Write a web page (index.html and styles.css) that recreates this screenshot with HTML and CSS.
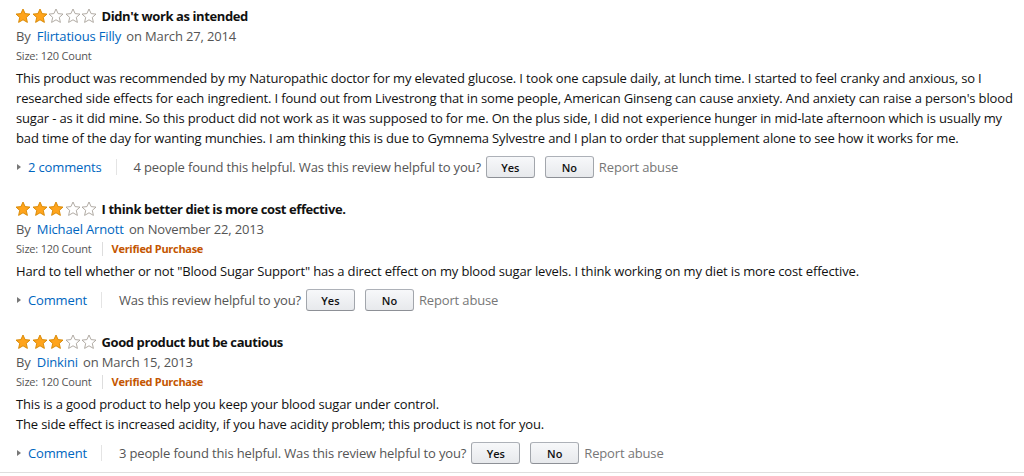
FILE: index.html
```html
<!DOCTYPE html>
<html>
<head>
<meta charset="utf-8">
<link rel="stylesheet" href="styles.css">
</head>
<body>
<div class="reviews">
  <div class="review">
    <div class="head">
      <span class="stars">
        <svg class="star full" viewBox="0 0 16 16"><polygon points="8,1 10.1,5.6 15,6.1 11.3,9.4 12.4,14.4 8,11.8 3.6,14.4 4.7,9.4 1,6.1 5.9,5.6"/></svg><svg class="star full" viewBox="0 0 16 16"><polygon points="8,1 10.1,5.6 15,6.1 11.3,9.4 12.4,14.4 8,11.8 3.6,14.4 4.7,9.4 1,6.1 5.9,5.6"/></svg><svg class="star empty" viewBox="0 0 16 16"><polygon points="8,1 10.1,5.6 15,6.1 11.3,9.4 12.4,14.4 8,11.8 3.6,14.4 4.7,9.4 1,6.1 5.9,5.6"/></svg><svg class="star empty" viewBox="0 0 16 16"><polygon points="8,1 10.1,5.6 15,6.1 11.3,9.4 12.4,14.4 8,11.8 3.6,14.4 4.7,9.4 1,6.1 5.9,5.6"/></svg><svg class="star empty" viewBox="0 0 16 16"><polygon points="8,1 10.1,5.6 15,6.1 11.3,9.4 12.4,14.4 8,11.8 3.6,14.4 4.7,9.4 1,6.1 5.9,5.6"/></svg>
      </span>
      <span class="title">Didn't work as intended</span>
    </div>
    <div class="byline">By <a class="link author">Flirtatious Filly</a> on March 27, 2014</div>
    <div class="meta"><span>Size: 120 Count</span></div>
    <div class="text">This product was recommended by my Naturopathic doctor for my elevated glucose. I took one capsule daily, at lunch time. I started to feel cranky and anxious, so I researched side effects for each ingredient. I found out from Livestrong that in some people, American Ginseng can cause anxiety. And anxiety can raise a person's blood sugar - as it did mine. So this product did not work as it was supposed to for me. On the plus side, I did not experience hunger in mid-late afternoon which is usually my bad time of the day for wanting munchies. I am thinking this is due to Gymnema Sylvestre and I plan to order that supplement alone to see how it works for me.</div>
    <div class="actions">
      <span class="caret"></span><a class="link">2 comments</a>
      <span class="sep"></span>
      <span class="helpful">4 people found this helpful. Was this review helpful to you?</span>
      <button class="btn">Yes</button><button class="btn">No</button>
      <span class="report">Report abuse</span>
    </div>
  </div>

  <div class="review">
    <div class="head">
      <span class="stars">
        <svg class="star full" viewBox="0 0 16 16"><polygon points="8,1 10.1,5.6 15,6.1 11.3,9.4 12.4,14.4 8,11.8 3.6,14.4 4.7,9.4 1,6.1 5.9,5.6"/></svg><svg class="star full" viewBox="0 0 16 16"><polygon points="8,1 10.1,5.6 15,6.1 11.3,9.4 12.4,14.4 8,11.8 3.6,14.4 4.7,9.4 1,6.1 5.9,5.6"/></svg><svg class="star full" viewBox="0 0 16 16"><polygon points="8,1 10.1,5.6 15,6.1 11.3,9.4 12.4,14.4 8,11.8 3.6,14.4 4.7,9.4 1,6.1 5.9,5.6"/></svg><svg class="star empty" viewBox="0 0 16 16"><polygon points="8,1 10.1,5.6 15,6.1 11.3,9.4 12.4,14.4 8,11.8 3.6,14.4 4.7,9.4 1,6.1 5.9,5.6"/></svg><svg class="star empty" viewBox="0 0 16 16"><polygon points="8,1 10.1,5.6 15,6.1 11.3,9.4 12.4,14.4 8,11.8 3.6,14.4 4.7,9.4 1,6.1 5.9,5.6"/></svg>
      </span>
      <span class="title">I think better diet is more cost effective.</span>
    </div>
    <div class="byline">By <a class="link author">Michael Arnott</a> on November 22, 2013</div>
    <div class="meta"><span>Size: 120 Count</span><span class="msep"></span><span class="verified">Verified Purchase</span></div>
    <div class="text">Hard to tell whether or not "Blood Sugar Support" has a direct effect on my blood sugar levels. I think working on my diet is more cost effective.</div>
    <div class="actions">
      <span class="caret"></span><a class="link">Comment</a>
      <span class="sep"></span>
      <span class="helpful">Was this review helpful to you?</span>
      <button class="btn">Yes</button><button class="btn">No</button>
      <span class="report">Report abuse</span>
    </div>
  </div>

  <div class="review last">
    <div class="head">
      <span class="stars">
        <svg class="star full" viewBox="0 0 16 16"><polygon points="8,1 10.1,5.6 15,6.1 11.3,9.4 12.4,14.4 8,11.8 3.6,14.4 4.7,9.4 1,6.1 5.9,5.6"/></svg><svg class="star full" viewBox="0 0 16 16"><polygon points="8,1 10.1,5.6 15,6.1 11.3,9.4 12.4,14.4 8,11.8 3.6,14.4 4.7,9.4 1,6.1 5.9,5.6"/></svg><svg class="star full" viewBox="0 0 16 16"><polygon points="8,1 10.1,5.6 15,6.1 11.3,9.4 12.4,14.4 8,11.8 3.6,14.4 4.7,9.4 1,6.1 5.9,5.6"/></svg><svg class="star empty" viewBox="0 0 16 16"><polygon points="8,1 10.1,5.6 15,6.1 11.3,9.4 12.4,14.4 8,11.8 3.6,14.4 4.7,9.4 1,6.1 5.9,5.6"/></svg><svg class="star empty" viewBox="0 0 16 16"><polygon points="8,1 10.1,5.6 15,6.1 11.3,9.4 12.4,14.4 8,11.8 3.6,14.4 4.7,9.4 1,6.1 5.9,5.6"/></svg>
      </span>
      <span class="title">Good product but be cautious</span>
    </div>
    <div class="byline">By <a class="link author">Dinkini</a> on March 15, 2013</div>
    <div class="meta"><span>Size: 120 Count</span><span class="msep"></span><span class="verified">Verified Purchase</span></div>
    <div class="text">This is a good product to help you keep your blood sugar under control.<br>The side effect is increased acidity, if you have acidity problem; this product is not for you.</div>
    <div class="actions">
      <span class="caret"></span><a class="link">Comment</a>
      <span class="sep"></span>
      <span class="helpful">3 people found this helpful. Was this review helpful to you?</span>
      <button class="btn">Yes</button><button class="btn">No</button>
      <span class="report">Report abuse</span>
    </div>
  </div>
</div>
</body>
</html>
```

FILE: styles.css
```css
html, body {
  margin: 0;
  padding: 0;
  background: #fff;
}
body {
  font-family: "Open Sans", "Noto Sans", Arial, sans-serif;
  font-size: 13px;
  letter-spacing: -0.15px;
  color: #111;
  width: 1024px;
  height: 476px;
  overflow: hidden;
}
.reviews {
  padding: 6px 0 0 0;
}
.review {
  padding: 0 6px 21px 16px;
}
.review.last {
  padding-bottom: 8px;
  border-bottom: 1px solid #dedede;
}
.head {
  display: flex;
  align-items: center;
  height: 20px;
}
.stars {
  display: flex;
  margin-left: -1px;
  margin-right: 4px;
}
.star {
  width: 16px;
  height: 16px;
  margin-right: 0.5px;
}
.star.full polygon {
  fill: #ffa41c;
  stroke: #d58600;
  stroke-width: 0.9;
  stroke-linejoin: round;
}
.star.empty polygon {
  fill: #fff;
  stroke: #a8a29a;
  stroke-width: 0.9;
  stroke-linejoin: round;
}
.title {
  font-weight: bold;
  font-size: 13px;
  letter-spacing: -0.4px;
}
.byline {
  line-height: 20px;
  color: #555;
}
.link {
  color: #0066c0;
  text-decoration: none;
}
.author {
  margin: 0 2px 0 3px;
}
.meta {
  display: flex;
  align-items: center;
  font-size: 11px;
  letter-spacing: -0.2px;
  line-height: 20px;
  color: #555;
}
.msep {
  width: 1px;
  height: 14px;
  background: #ddd;
  margin: 0 9px 0 10px;
}
.verified {
  color: #c45500;
  font-weight: bold;
  letter-spacing: -0.3px;
}
.text {
  margin-top: 2px;
  line-height: 20px;
}
.actions {
  display: flex;
  align-items: center;
  margin-top: 8px;
  height: 22px;
  color: #555;
}
.caret {
  width: 0;
  height: 0;
  border-top: 3px solid transparent;
  border-bottom: 3px solid transparent;
  border-left: 4px solid #777;
  margin: 0 7px 0 1px;
}
.sep {
  width: 1px;
  height: 16px;
  background: #e4e4e4;
  margin: 0 17px 0 14px;
}
.helpful {
  margin-right: 5px;
}
.btn {
  font-family: inherit;
  font-size: 11px;
  font-weight: 600;
  letter-spacing: 0;
  color: #111;
  width: 49px;
  height: 22px;
  padding: 0;
  border: 1px solid #adb1b8;
  border-color: #adb1b8 #a2a6ac #8d9096;
  border-radius: 3px;
  background: linear-gradient(to bottom, #f7f8fa, #e7e9ec);
  margin-right: 10px;
}
.btn + .btn {
  margin-right: 5px;
}
.report {
  color: #777;
}
```
